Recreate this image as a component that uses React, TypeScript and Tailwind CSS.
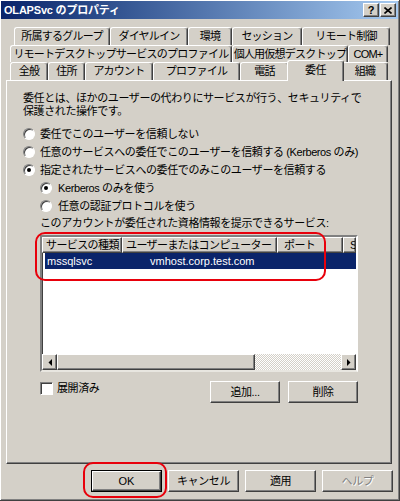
import React from "react";

const FONT = "font-['Liberation_Sans','Noto_Sans_CJK_JP',sans-serif]";
const RAISED =
  "border border-t-white border-l-white border-r-[#404040] border-b-[#404040] shadow-[inset_-1px_-1px_0_#808080]";

function Tab({ label, w, selected }: { label: string; w: string; selected?: boolean }) {
  if (selected) {
    return (
      <div
        className={`${w} h-[21px] -mx-[2px] relative z-10 top-[1px] bg-[#d4d0c8] flex items-center justify-center border-t border-l border-r border-t-white border-l-white border-r-[#404040] shadow-[inset_-1px_0_0_#808080] rounded-t-[3px] text-[11px] tracking-[-0.6px] whitespace-nowrap pb-[2px]`}
      >
        {label}
      </div>
    );
  }
  return (
    <div
      className={`${w} h-full flex items-center justify-center border-t border-l border-r border-t-white border-l-white border-r-[#404040] shadow-[inset_-1px_0_0_#808080] rounded-t-[3px] text-[11px] tracking-[-0.75px] whitespace-nowrap overflow-hidden`}
    >
      {label}
    </div>
  );
}

function Radio({ checked }: { checked?: boolean }) {
  return (
    <span className="w-[12px] h-[12px] shrink-0 rounded-full bg-white border border-t-[#808080] border-l-[#808080] border-r-white border-b-white shadow-[inset_1px_1px_0_#404040] flex items-center justify-center">
      {checked && <span className="w-[4px] h-[4px] rounded-full bg-black" />}
    </span>
  );
}

function RadioRow({ checked, label, indent }: { checked?: boolean; label: string; indent?: boolean }) {
  return (
    <div className={`h-[18px] flex items-center ${indent ? "ml-[17px] gap-[6px]" : "gap-[5px]"}`}>
      <Radio checked={checked} />
      <span className="text-[11px] tracking-[-0.4px] whitespace-nowrap">{label}</span>
    </div>
  );
}

function Btn({
  children,
  w,
  disabled,
}: {
  children: React.ReactNode;
  w: string;
  disabled?: boolean;
}) {
  return (
    <div
      className={`${w} h-[22px] ${RAISED} flex items-center justify-center text-[11px] tracking-[-0.4px] ${
        disabled ? "text-[#808080] [text-shadow:1px_1px_0_#fff]" : "text-black"
      }`}
    >
      {children}
    </div>
  );
}

function Arrow({ dir }: { dir: "l" | "r" }) {
  return (
    <div className={`w-[15px] h-full ${RAISED} bg-[#d4d0c8] flex items-center justify-center`}>
      <svg width="4" height="7" viewBox="0 0 4 7">
        {dir === "l" ? <polygon points="4,0 4,7 0.5,3.5" fill="#000" /> : <polygon points="0,0 0,7 3.5,3.5" fill="#000" />}
      </svg>
    </div>
  );
}

export default function App() {
  return (
    <div
      className={`w-[400px] h-[501px] bg-[#d4d0c8] relative overflow-hidden text-black ${FONT} border-r border-b border-r-[#404040] border-b-[#404040] shadow-[inset_1px_1px_0_#fff,inset_-1px_-1px_0_#808080]`}
    >
      {/* Title bar */}
      <div className="pt-px px-px">
        <div className="h-[18px] flex items-center justify-between bg-linear-to-r from-[#0a246a] to-[#a6caf0] pl-[3px] pr-[2px]">
          <span className="text-white font-bold text-[11px] tracking-[-0.2px] whitespace-nowrap">OLAPSvc のプロパティ</span>
          <div className="flex gap-[1px]">
            <div className={`w-[16px] h-[14px] bg-[#d4d0c8] ${RAISED} flex items-center justify-center text-[11px] font-bold leading-none`}>
              ?
            </div>
            <div className={`w-[16px] h-[14px] bg-[#d4d0c8] ${RAISED} flex items-center justify-center`}>
              <svg width="8" height="7" viewBox="0 0 8 7">
                <path d="M0.5 0.5 L7.5 6.5 M7.5 0.5 L0.5 6.5" stroke="#000" strokeWidth="1.6" />
              </svg>
            </div>
          </div>
        </div>
      </div>

      {/* Tabs */}
      <div className="mt-[8px]">
        <div className="flex h-[18px] ml-[14px]">
          <Tab label="所属するグループ" w="w-[96px]" />
          <Tab label="ダイヤルイン" w="w-[78px]" />
          <Tab label="環境" w="w-[44px]" />
          <Tab label="セッション" w="w-[70px]" />
          <Tab label="リモート制御" w="w-[88px]" />
        </div>
        <div className="flex h-[17px] ml-[10px]">
          <Tab label="リモートデスクトップサービスのプロファイル" w="w-[222px]" />
          <Tab label="個人用仮想デスクトップ" w="w-[116px]" />
          <Tab label="COM+" w="w-[40px]" />
        </div>
        <div className="flex h-[18px] ml-[10px] items-end">
          <Tab label="全般" w="w-[38px]" />
          <Tab label="住所" w="w-[37px]" />
          <Tab label="アカウント" w="w-[68px]" />
          <Tab label="プロファイル" w="w-[87px]" />
          <Tab label="電話" w="w-[49px]" />
          <Tab label="委任" w="w-[57px]" selected />
          <Tab label="組織" w="w-[46px]" />
        </div>
      </div>

      {/* Panel */}
      <div className="mx-[6px] w-[386px] h-[384px] border-t border-l border-t-white border-l-white border-r border-b border-r-[#404040] border-b-[#404040] shadow-[inset_-1px_-1px_0_#808080] pl-[16px] pt-[11px]">
        <p className="text-[11px] leading-[13px] tracking-[-0.4px] whitespace-nowrap">
          委任とは、ほかのユーザーの代わりにサービスが行う、セキュリティで
          <br />
          保護された操作です。
        </p>
        <div className="mt-[7px]">
          <RadioRow label="委任でこのユーザーを信頼しない" />
          <RadioRow label="任意のサービスへの委任でこのユーザーを信頼する (Kerberos のみ)" />
          <RadioRow checked label="指定されたサービスへの委任でのみこのユーザーを信頼する" />
          <RadioRow indent checked label="Kerberos のみを使う" />
          <RadioRow indent label="任意の認証プロトコルを使う" />
        </div>
        <div className="ml-[17px] h-[17px] flex items-center text-[11px] tracking-[-0.4px] whitespace-nowrap">
          このアカウントが委任された資格情報を提示できるサービス:
        </div>

        {/* List view */}
        <div className="ml-[17px] mt-[3px] w-[318px] h-[137px] border-2 border-t-[#808080] border-l-[#808080] border-r-white border-b-[#e8e6e0] bg-white flex flex-col overflow-hidden shadow-[inset_1px_1px_0_#404040]">
          <div className="h-[16px] flex shrink-0 bg-[#d4d0c8] text-[11px] tracking-[-0.6px] whitespace-nowrap">
            <div className={`w-[80px] h-full ${RAISED} pl-[3px] flex items-center overflow-hidden`}>サービスの種類</div>
            <div className={`w-[155px] h-full ${RAISED} pl-[3px] flex items-center overflow-hidden`}>ユーザーまたはコンピューター</div>
            <div className={`w-[66px] h-full ${RAISED} pl-[6px] flex items-center overflow-hidden`}>ポート</div>
            <div className={`flex-1 h-full ${RAISED} pl-[6px] flex items-center overflow-hidden`}>Se</div>
          </div>
          <div className="h-[16px] ml-[3px] bg-[#0a246a] text-white flex items-center text-[11px] whitespace-nowrap">
            <span className="w-[105px] pl-[2px]">mssqlsvc</span>
            <span>vmhost.corp.test.com</span>
          </div>
          <div className="flex-1" />
          <div className="h-[16px] flex shrink-0">
            <Arrow dir="l" />
            <div className={`w-[198px] h-full bg-[#d4d0c8] ${RAISED}`} />
            <div className="flex-1 h-full bg-[repeating-conic-gradient(#ffffff_0_25%,#d4d0c8_0_50%)] bg-size-[2px_2px]" />
            <Arrow dir="r" />
          </div>
        </div>

        {/* Checkbox + buttons */}
        <div className="ml-[17px] mt-[9px] w-[318px] flex justify-between">
          <div className="flex items-center gap-[4px] h-[13px] mt-[1px]">
            <span className="w-[13px] h-[13px] bg-white border border-t-[#808080] border-l-[#808080] border-r-white border-b-white shadow-[inset_1px_1px_0_#404040]" />
            <span className="text-[11px] tracking-[-0.4px]">展開済み</span>
          </div>
          <div className="flex gap-[8px]">
            <Btn w="w-[70px]">追加...</Btn>
            <Btn w="w-[70px]">削除</Btn>
          </div>
        </div>
      </div>

      {/* Bottom buttons */}
      <div className="mt-[6px] ml-[91px] flex gap-[6px]">
        <div className="w-[71px] h-[22px] border border-black">
          <div className={`w-full h-full ${RAISED} flex items-center justify-center text-[11px]`}>OK</div>
        </div>
        <Btn w="w-[71px]">キャンセル</Btn>
        <Btn w="w-[71px]">適用</Btn>
        <Btn w="w-[71px]" disabled>
          ヘルプ
        </Btn>
      </div>

      {/* Red annotations */}
      <div className="absolute left-[35px] top-[232px] w-[291px] h-[49px] border-2 border-[#e8000b] rounded-[10px] pointer-events-none" />
      <div className="absolute left-[83px] top-[462px] w-[84px] h-[36px] border-2 border-[#e8000b] rounded-[10px] pointer-events-none" />
    </div>
  );
}
